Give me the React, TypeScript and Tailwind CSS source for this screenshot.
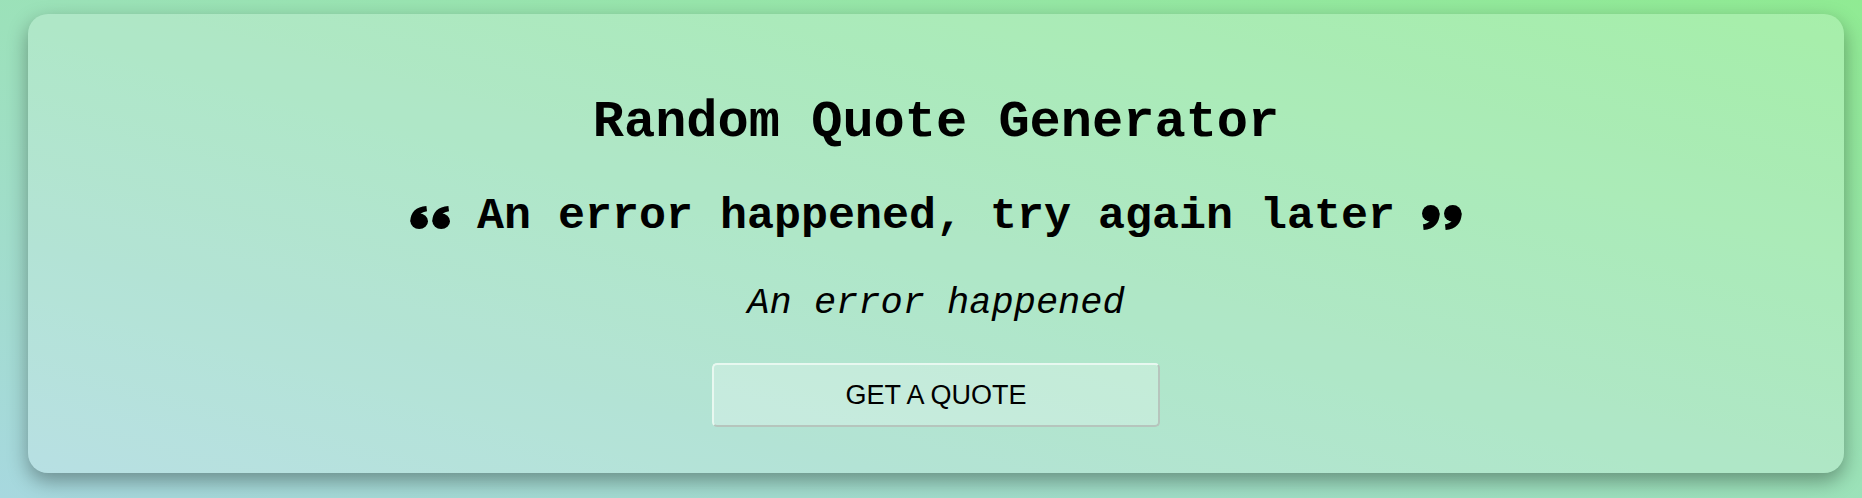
import React from "react";

const GLYPH = "M0.4 14.5 C0.4 6.2 6 0.6 16.4 0 L17 5 C11.4 5.8 8.2 8.8 8.2 12.6 Z";

function Pair() {
  return (
    <>
      <g>
        <ellipse cx="9.2" cy="14.6" rx="8.8" ry="7.4" />
        <path d={GLYPH} />
      </g>
      <g transform="translate(22 0)">
        <ellipse cx="9.2" cy="14.6" rx="8.8" ry="7.4" />
        <path d={GLYPH} />
      </g>
    </>
  );
}

function QuoteLeft() {
  return (
    <svg width="40" height="23" viewBox="0 0 40 22" preserveAspectRatio="none" className="inline-block align-[-1px]" fill="#000">
      <Pair />
    </svg>
  );
}

function QuoteRight() {
  return (
    <svg width="40" height="25" viewBox="0 0 40 22" preserveAspectRatio="none" className="inline-block align-[-2px]" fill="#000">
      <g transform="rotate(180 20 11)">
        <Pair />
      </g>
    </svg>
  );
}

export default function App() {
  return (
    <div className="w-full min-h-[498px] bg-[linear-gradient(to_top_right,#a7d8df,#90eb93)] pt-[14px] pl-[28px] overflow-hidden">
      <div className="w-[1816px] h-[459px] rounded-[20px] bg-white/20 shadow-[0_8px_20px_rgba(0,0,0,0.35)] flex flex-col items-center pt-[79px] font-['Liberation_Mono','Courier_New',monospace] text-black">
        <h1 className="text-[52px] leading-[60px] font-bold whitespace-nowrap">Random Quote Generator</h1>
        <p className="mt-[36px] text-[45px] leading-[56px] font-bold whitespace-nowrap">
          <QuoteLeft /> An error happened, try again later <QuoteRight />
        </p>
        <p className="mt-[35px] text-[37px] leading-[46px] italic whitespace-nowrap">An error happened</p>
        <button className="mt-[37px] w-[448px] h-[64px] rounded-[5px] bg-white/25 border-2 border-t-[#e8f8f0] border-l-[#e8f8f0] border-b-[#b6c5bd] border-r-[#b6c5bd] font-['Liberation_Sans',Arial,sans-serif] text-[27px] text-black">
          GET A QUOTE
        </button>
      </div>
    </div>
  );
}
